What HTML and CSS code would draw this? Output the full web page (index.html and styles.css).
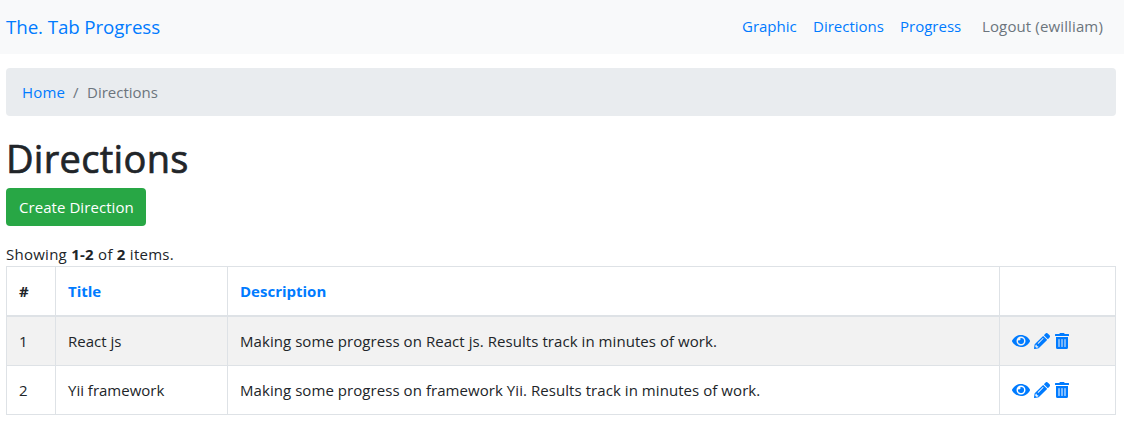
FILE: index.html
```html
<!DOCTYPE html>
<html lang="en">
<head>
<meta charset="utf-8">
<title>Directions</title>
<link rel="stylesheet" href="styles.css">
</head>
<body>
<svg class="sprite" aria-hidden="true">
  <symbol id="eye" viewBox="0 0 576 512"><path d="M573 241C518 136 411 64 288 64S58 136 3 241a32 32 0 000 30c55 105 162 177 285 177s230-72 285-177a32 32 0 000-30zM288 400a144 144 0 11144-144 144 144 0 01-144 144zm0-240a95 95 0 00-25 4 48 48 0 01-67 67 96 96 0 1092-71z"/></symbol>
  <symbol id="pencil" viewBox="0 0 512 512"><path d="M498 142l-46 46c-5 5-13 5-17 0L324 77c-5-5-5-12 0-17l46-46c19-19 49-19 68 0l60 60c19 19 19 49 0 68zm-214-42L22 362 0 484c-3 16 12 30 28 28l122-22 262-262c5-5 5-13 0-17L301 100c-4-5-12-5-17 0zM124 340c-5-6-5-14 0-20l154-154c6-5 14-5 20 0s5 14 0 20L144 340c-6 5-14 5-20 0zm-36 84h48v36l-64 12-32-31 12-65h36v48z"/></symbol>
  <symbol id="trash" viewBox="0 0 448 512"><path d="M32 464a48 48 0 0048 48h288a48 48 0 0048-48V128H32zm272-256a16 16 0 0132 0v224a16 16 0 01-32 0zm-96 0a16 16 0 0132 0v224a16 16 0 01-32 0zm-96 0a16 16 0 0132 0v224a16 16 0 01-32 0zM432 32H312l-9-19a24 24 0 00-22-13H167a24 24 0 00-22 13l-9 19H16A16 16 0 000 48v32a16 16 0 0016 16h416a16 16 0 0016-16V48a16 16 0 00-16-16z"/></symbol>
</svg>
<nav class="navbar">
  <a class="brand" href="#">The. Tab Progress</a>
  <div class="nav-links">
    <a class="nav-graphic" href="#">Graphic</a>
    <a class="nav-directions" href="#">Directions</a>
    <a class="nav-progress" href="#">Progress</a>
    <button class="logout" type="button">Logout (ewilliam)</button>
  </div>
</nav>
<main class="container">
  <div class="breadcrumb"><a class="crumb-home" href="#">Home</a><span class="slash">/</span><span class="crumb-current">Directions</span></div>
  <h1 class="title">Directions</h1>
  <a class="create" href="#">Create Direction</a>
  <div class="summary">Showing <b>1-2</b> of <b>2</b> items.</div>
  <table class="grid">
    <colgroup><col class="col-num"><col class="col-title"><col class="col-desc"><col class="col-actions"></colgroup>
    <thead><tr><th>#</th><th><a href="#">Title</a></th><th><a href="#">Description</a></th><th></th></tr></thead>
    <tbody>
      <tr class="striped"><td>1</td><td>React js</td><td class="description">Making some progress on React js. Results track in minutes of work.</td>
        <td><div class="actions"><svg class="icon icon-eye"><use href="#eye"/></svg><svg class="icon icon-pencil"><use href="#pencil"/></svg><svg class="icon icon-trash"><use href="#trash"/></svg></div></td></tr>
      <tr><td>2</td><td>Yii framework</td><td class="description">Making some progress on framework Yii. Results track in minutes of work.</td>
        <td><div class="actions"><svg class="icon icon-eye"><use href="#eye"/></svg><svg class="icon icon-pencil"><use href="#pencil"/></svg><svg class="icon icon-trash"><use href="#trash"/></svg></div></td></tr>
    </tbody>
  </table>
</main>
</body>
</html>
```
FILE: styles.css
```css
* { box-sizing: border-box; }
body { margin: 0; background: #fff; color: #212529; font: 15px/24px "Open Sans", "Noto Sans", sans-serif; overflow: hidden; }
a { color: #007bff; text-decoration: none; }
.sprite { display: none; }
.navbar { height: 54px; padding: 0 21px 2px 6px; background: #f8f9fa; display: flex; align-items: center; justify-content: space-between; }
.brand { padding-top: 1px; font-size: 18.75px; line-height: 30px; letter-spacing: -.1px; width: 154px; white-space: nowrap; }
.nav-links { display: flex; white-space: nowrap; }
.nav-links a { margin-right: 16px; }
.nav-graphic { width: 55px; }
.nav-directions { width: 71px; }
.nav-progress { width: 61px; }
.logout { margin: 0 0 0 5px; padding: 0; border: 0; background: none; color: #6c757d; font: inherit; letter-spacing: .13px; width: 121px; text-align: left; white-space: nowrap; }
.container { padding: 14px 8px 0 6px; }
.breadcrumb { height: 48px; padding: 12px 16px; background: #e9ecef; border-radius: 4px; display: flex; color: #6c757d; }
.crumb-home { width: 43px; letter-spacing: .15px; }
.slash { width: 22px; padding-left: 8px; }
.title { margin: 16px 0 8px; padding-top: 2px; height: 48px; font-size: 38px; line-height: 48px; font-weight: 500; letter-spacing: .3px; -webkit-text-stroke: .7px #212529; }
.create { display: block; width: 140px; height: 38px; padding: 7px 13px; border-radius: 4px; background: #28a745; color: #fff; letter-spacing: .06px; white-space: nowrap; }
.summary { margin-top: 16px; letter-spacing: .26px; }
b, th { font-weight: 700; }
.grid { width: 1110px; table-layout: fixed; border-collapse: collapse; border: 1px solid #dee2e6; }
.col-num { width: 49px; }
.col-title { width: 172px; }
.col-desc { width: 772px; }
.grid th, .grid td { height: 49px; padding: 12px; border: 1px solid #dee2e6; text-align: left; white-space: nowrap; }
.grid th { border-bottom-width: 2px; }
.grid .description { letter-spacing: .06px; }
.striped { background: #f2f2f2; }
.actions { display: flex; gap: 4.4px; height: 24px; align-items: center; }
.icon { height: 16px; fill: #007bff; overflow: visible; }
.icon-eye { width: 18px; }
.icon-pencil { width: 16px; }
.icon-trash { width: 14px; }
```
